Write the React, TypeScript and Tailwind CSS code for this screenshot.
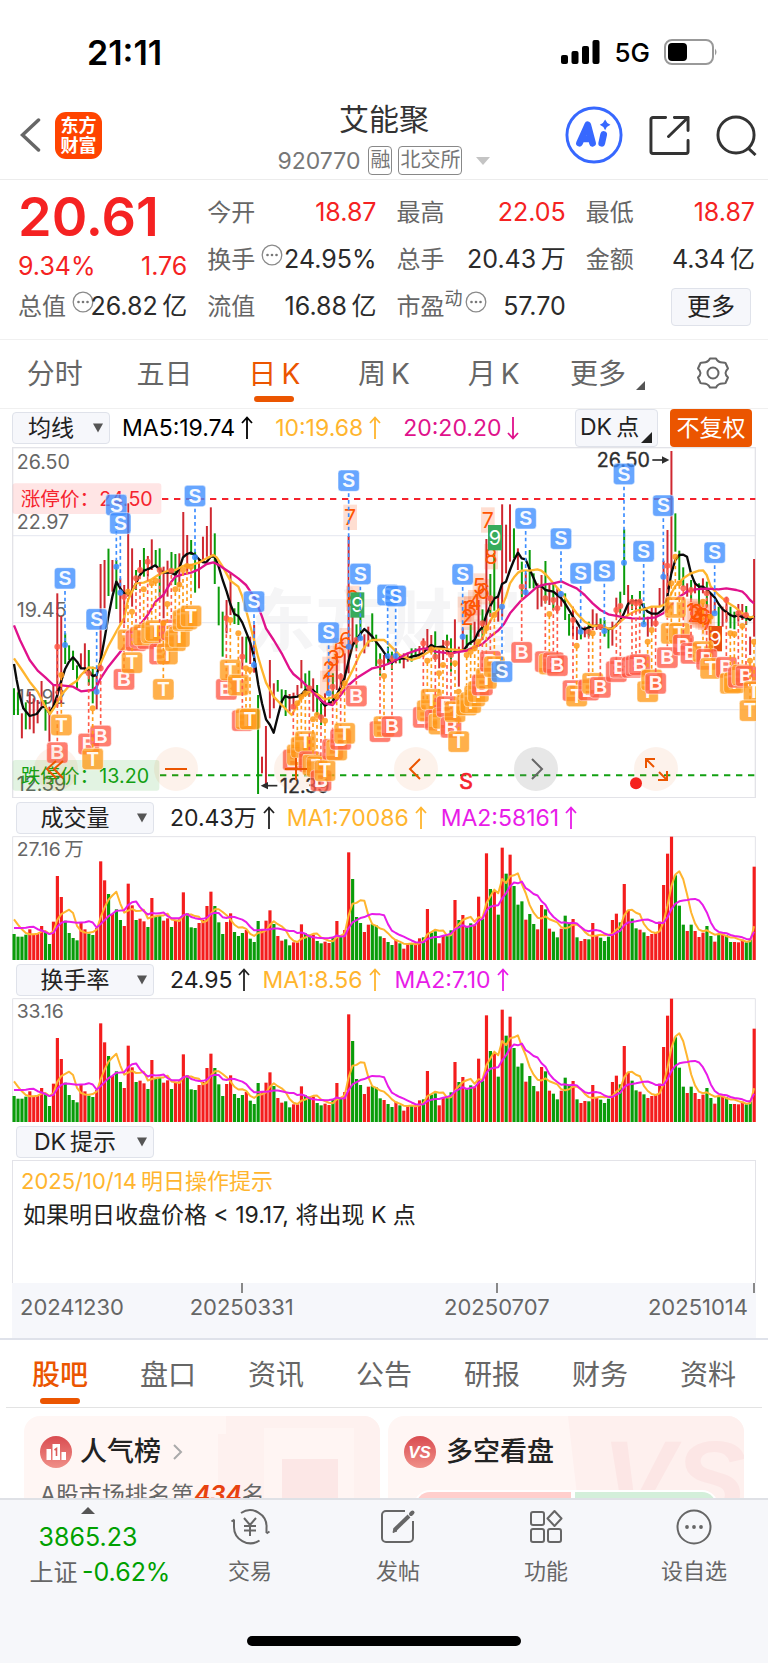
import React from 'react';

/* ---------- market data (chart units: 3 per pixel) ---------- */

const FIRST = 42;
const STEP = 11.81;
const barX = (i: number) => FIRST + i * STEP;

const VOLUME =
  'g78 g70 g70 g76 r92 r78 r78 r102 g85 g48 r115 r252 r189 g118 g81 g66 g59 r114 r92 g79 g75 r96 r296 r239 g198 r138 g152 g120 r102 r229 r164 g120 r124 r116 g99 r186 g132 g134 r118 r125 g99 r120 r122 r203 g140 g98 g96 r111 r120 r162 r205 g162 g113 g78 r114 r140 g84 g72 g81 r90 g64 g54 g117 r90 r118 r149 g108 r72 r58 g62 g44 r53 r53 r107 g80 g76 r76 g57 g50 r55 r51 g68 r117 g72 r90 r323 g243 g129 g111 r84 r106 g108 g104 g71 r66 g54 g45 r61 g50 r34 r50 g51 r51 r65 g68 r153 g82 g86 r50 r72 g76 g89 r180 g120 r135 g102 g110 r106 r190 g124 r320 g213 r208 g136 r337 g259 r316 g222 g166 g176 r121 g138 g108 r92 r165 g152 r94 g85 g68 r94 g133 g111 r123 g68 r57 r63 g62 r111 r75 g67 g57 g70 r120 r139 g113 r228 r148 g124 g95 r91 g83 r72 r78 r81 r115 r225 r319 r370 g254 g163 g106 r87 g106 r87 r69 r82 g102 g72 r55 g78 r78 g74 g54 r54 r53 r61 g53 g61 r280'
    .split(' ')
    .map((s) => ({ up: s[0] === 'r', v: Number(s.slice(1)) }));

const PRIOR = [70, 70, 70, 70, 70, 150, 140, 132, 110];

const CANDLES =
  'g745-825 g757-825 r820-895 g787-868 r755-868 r775-880 r780-850 r723-800 g780-872 r800-905 r735-800 r460-800 r528-790 g580-672 g616-660 g632-690 g676-750 r640-684 r610-700 g630-735 g680-790 r700-808 r372-685 r360-505 g326-468 r360-455 g360-507 r415-550 r435-550 r190-470 r325-500 g390-450 r360-400 g324-410 r348-410 r298-390 g330-380 g325-470 r380-535 r362-470 g336-390 g342-435 r340-440 r216-350 r285-400 g300-345 g335-458 r355-445 r290-360 r258-350 r202-345 g280-432 g440-556 g515-650 r480-580 r400-525 g505-552 g486-555 r590-688 g590-668 r590-672 r555-698 g765-1062 r950-1000 r858-1036 r660-835 r730-805 g720-755 g748-790 g750-828 r762-815 r758-800 r735-765 r660-745 g700-765 g692-770 r715-815 g735-825 g790-855 r760-830 g770-795 g700-790 r640-750 r700-750 r640-720 r288-700 r530-620 g553-625 g530-600 r583-640 r560-620 g520-605 g584-678 g640-707 r645-690 g620-670 g635-690 r625-670 g645-670 r640-685 r640-665 g625-665 g625-652 r618-655 r595-650 r567-632 r585-640 g574-660 r625-685 r600-660 g584-640 g595-695 r538-640 r620-740 r565-630 g584-625 g555-615 r545-620 r480-590 g508-600 r297-560 g402-530 g340-512 r470-545 r193-530 r254-400 r193-365 g265-355 r325-390 g365-472 r398-470 g330-445 g400-445 r430-508 r405-500 g363-490 r430-495 g430-510 r445-520 r455-500 g460-540 g522-587 r500-590 r560-600 g565-598 r560-592 g545-590 r508-570 r520-570 g535-570 g540-590 g567-625 r545-617 r473-530 g455-520 g268-465 r435-525 g465-510 r478-515 g453-520 g490-553 r530-590 r500-560 r500-560 r444-500 r362-500 r270-510 r33-400 g220-335 g332-420 g382-440 r430-470 g420-480 r425-460 g430-495 r415-460 g425-500 r460-530 r485-520 g500-570 r500-560 r470-545 g500-565 g515-568 r492-545 r492-540 g498-555 r590-645 r357-590'
    .split(' ')
    .map((s) => {
      const [hi, lo] = s.slice(1).split('-').map(Number);
      return { up: s[0] === 'r', hi, lo };
    });

const MA5 =
  '42,672 50,720 60,770 70,805 89,828 110,822 125,802 136,800 148,820 160,800 172,765 184,722 195,688 207,665 219,652 231,665 243,685 255,685 266,692 278,708 290,705 302,660 313,600 325,530 337,470 349,425 361,445 372,460 392,460 408,430 420,405 431,392 443,388 455,382 466,376 479,388 490,398 510,397 526,404 538,385 549,352 561,342 573,338 585,345 597,358 608,366 618,368 632,350 644,350 656,380 668,420 680,455 691,492 703,522 715,528 727,548 740,580 752,612 762,650 768,690 775,735 786,790 798,838 810,855 821,878 833,830 845,785 855,768 868,773 892,770 904,764 916,750 928,748 939,750 951,762 963,782 975,797 987,790 998,785 1010,765 1022,740 1034,712 1046,662 1058,615 1069,600 1081,582 1093,567 1105,578 1117,590 1128,605 1140,620 1152,637 1164,655 1176,668 1187,660 1199,656 1223,655 1235,650 1258,645 1270,638 1282,625 1294,615 1306,622 1329,620 1341,632 1353,642 1365,635 1390,632 1405,612 1424,600 1435,575 1447,562 1459,525 1471,498 1483,475 1494,470 1506,432 1518,425 1530,390 1542,360 1554,338 1565,355 1577,358 1589,388 1601,415 1612,440 1624,438 1636,450 1660,455 1672,465 1684,475 1695,490 1707,510 1719,530 1730,545 1742,565 1755,568 1766,562 1790,556 1813,562 1825,567 1837,565 1849,555 1861,540 1872,520 1884,492 1896,484 1919,484 1931,500 1943,515 1955,521 1973,521 1990,508 2002,470 2014,400 2026,360 2038,345 2050,344 2061,350 2073,400 2085,430 2097,440 2109,440 2120,448 2132,460 2144,472 2156,492 2168,508 2191,525 2203,530 2215,525 2227,532 2238,532 2250,540 2262,528';
const MA10 =
  '42,655 66,690 89,725 113,755 136,800 150,822 166,798 184,765 207,738 231,722 243,705 266,682 290,685 302,670 325,618 349,575 372,535 384,480 408,430 431,428 455,418 479,402 502,393 526,390 549,378 573,375 597,368 620,355 640,345 650,352 668,380 691,422 715,440 727,470 738,510 750,555 762,600 774,650 786,690 798,728 821,770 845,795 875,825 892,795 904,770 928,755 951,762 975,778 998,772 1022,755 1040,725 1058,690 1081,640 1105,605 1117,600 1152,600 1164,610 1176,622 1199,645 1235,660 1258,652 1282,638 1306,625 1350,628 1400,632 1424,620 1447,595 1459,565 1483,520 1506,500 1518,470 1530,430 1542,412 1554,398 1566,392 1589,392 1612,388 1624,392 1636,402 1660,430 1684,458 1707,490 1730,520 1754,545 1778,558 1801,556 1825,566 1837,566 1861,545 1884,525 1908,512 1931,508 1955,500 1979,500 2002,490 2014,460 2026,438 2050,415 2073,400 2097,392 2109,391 2120,405 2132,440 2156,465 2179,485 2203,500 2227,520 2250,532 2262,530';
const MA20 =
  '42,556 60,600 89,660 113,692 136,712 160,735 184,736 219,740 243,754 278,750 290,740 302,715 325,680 349,650 372,622 396,590 420,555 443,525 467,485 490,465 514,425 526,410 549,403 573,398 597,388 620,372 640,367 656,375 691,398 715,415 738,435 765,475 786,530 798,565 821,600 845,640 868,685 880,702 904,722 928,745 951,770 975,790 998,795 1022,765 1046,735 1069,715 1093,700 1117,685 1140,680 1164,672 1187,660 1223,640 1258,628 1282,625 1306,635 1350,640 1400,632 1424,622 1447,612 1471,590 1494,572 1512,552 1530,520 1560,485 1589,460 1612,440 1636,433 1660,430 1684,424 1707,435 1730,445 1754,465 1778,490 1801,510 1825,523 1861,530 1896,535 1931,536 1967,532 1990,520 2014,495 2038,470 2061,455 2085,448 2120,446 2156,448 2179,445 2209,450 2227,455 2238,465 2250,480 2262,490';

type Mark = [kind: 'S' | 'B' | 'T', x: number, y: number, dot: number];

const MARKS: Mark[] = [
  ['B', 172, 938, 620], ['T', 184, 855, 705], ['B', 266, 912, 700], ['B', 302, 888, 685], ['T', 278, 957, 805],
  ['B', 372, 718, 470], ['T', 384, 600, 455], ['B', 408, 602, 415], ['B', 420, 592, 390], ['T', 396, 668, 515],
  ['B', 443, 596, 365], ['T', 431, 585, 448], ['T', 455, 578, 430], ['T', 467, 572, 422], ['B', 479, 642, 390],
  ['B', 514, 570, 392], ['T', 502, 642, 492], ['T', 490, 748, 550], ['T', 526, 602, 448], ['T', 538, 590, 434],
  ['T', 549, 542, 390], ['T', 561, 537, 378], ['T', 573, 528, 380], ['B', 679, 748, 535], ['T', 691, 690, 540],
  ['T', 715, 735, 580], ['B', 727, 842, 650], ['T', 738, 837, 685], ['T', 750, 837, 690],
  ['B', 880, 960, 800], ['T', 892, 945, 790], ['T', 904, 922, 770], ['T', 916, 905, 760], ['B', 928, 965, 745],
  ['T', 939, 975, 838], ['T', 951, 980, 825], ['B', 963, 1022, 832], ['T', 975, 992, 842], ['B', 998, 928, 740],
  ['T', 1010, 930, 770], ['B', 1022, 898, 710], ['T', 1034, 880, 730], ['B', 1069, 768, 600], ['B', 1140, 875, 665],
  ['T', 1152, 860, 708], ['B', 1176, 860, 655], ['B', 1270, 832, 610], ['T', 1282, 812, 662], ['T', 1294, 778, 628],
  ['B', 1306, 840, 650], ['T', 1317, 852, 700], ['T', 1329, 835, 675], ['B', 1341, 800, 610], ['B', 1353, 862, 645],
  ['T', 1365, 815, 670], ['T', 1376, 905, 755], ['T', 1400, 795, 645], ['T', 1412, 788, 635], ['T', 1424, 768, 625],
  ['T', 1435, 755, 605], ['B', 1447, 735, 550], ['T', 1459, 715, 565], ['B', 1471, 664, 475], ['T', 1483, 680, 525],
  ['B', 1565, 637, 440], ['B', 1636, 665, 475], ['T', 1648, 672, 522], ['B', 1660, 668, 480], ['B', 1672, 677, 505],
  ['B', 1719, 752, 540], ['T', 1730, 768, 617], ['B', 1766, 750, 575], ['T', 1778, 730, 580], ['B', 1801, 742, 560],
  ['B', 1849, 695, 510], ['B', 1861, 682, 498], ['B', 1896, 682, 485], ['B', 1908, 678, 490], ['B', 1919, 674, 485],
  ['T', 1943, 755, 605], ['T', 1955, 720, 570], ['B', 1967, 730, 550], ['B', 2002, 653, 377], ['T', 2014, 580, 430],
  ['T', 2026, 502, 350], ['T', 2038, 580, 430], ['B', 2050, 615, 445], ['B', 2073, 640, 450], ['T', 2109, 635, 485],
  ['B', 2120, 658, 460], ['T', 2132, 685, 530], ['B', 2179, 682, 480], ['T', 2191, 730, 580], ['T', 2203, 728, 582],
  ['B', 2215, 712, 520], ['T', 2227, 705, 558], ['B', 2238, 708, 525], ['T', 2262, 755, 605], ['T', 2250, 812, 662],
  ['S', 195, 415, 615], ['S', 290, 538, 755], ['S', 349, 195, 380], ['S', 361, 250, 458], ['S', 585, 168, 352],
  ['S', 762, 485, 675], ['S', 1046, 122, 620], ['S', 986, 578, 760], ['S', 1081, 402, 595], ['S', 1163, 465, 648],
  ['S', 1187, 468, 648], ['S', 1388, 403, 590], ['S', 1506, 695, 500], ['S', 1577, 235, 457], ['S', 1683, 296, 462],
  ['S', 1742, 400, 575], ['S', 1813, 393, 573], ['S', 1872, 102, 368], ['S', 1931, 334, 553], ['S', 1990, 197, 410],
  ['S', 2144, 338, 520],
];

const MARK_COLOR = { S: '#3c8dff', B: '#ff5a48', T: '#ff9a18' };

const COUNTS: [string, number, number][] = [
  ['1', 980, 730], ['2', 987, 688], ['3', 1000, 655], ['5', 1018, 632], ['6', 1037, 602], ['7', 1050, 232], ['8', 1058, 475],
  ['1', 1393, 508], ['2', 1402, 532], ['3', 1412, 506], ['4', 1424, 488], ['5', 1438, 438], ['6', 1450, 455], ['7', 1463, 240], ['8', 1473, 350],
  ['1', 2072, 514], ['2', 2082, 522], ['3', 2090, 516], ['4', 2097, 526], ['5', 2106, 530], ['6', 2114, 532], ['7', 2124, 548],
];

/* ---------- charts ---------- */

function average(values: number[], span: number) {
  const all = [...PRIOR, ...values];
  return values
    .map((_, i) => {
      const end = i + PRIOR.length + 1;
      const sum = all.slice(end - span, end).reduce((a, b) => a + b, 0);
      return `${barX(i)},${480 - sum / span}`;
    })
    .join(' ');
}

const VALUES = VOLUME.map((b) => b.v);
const VOL_FAST = average(VALUES, 5);
const VOL_SLOW = average(VALUES, 10);

function VolumeChart({ label, name }: { label: string; name: string }) {
  return (
    <svg viewBox="36 108 2232 372" className="block w-full" role="img" aria-label={name}>
      <path d="M38 480V110H2266V480" fill="none" stroke="#e3e3e8" strokeWidth="3" />
      {VOLUME.map((b, i) => (
        <rect key={i} x={barX(i) - 4.5} y={480 - b.v} width="9.5" height={b.v} fill={b.up ? '#f41d1d' : '#0a9c0a'} />
      ))}
      <polyline points={VOL_FAST} fill="none" stroke="#ffb52e" strokeWidth="6" strokeLinejoin="round" />
      <polyline points={VOL_SLOW} fill="none" stroke="#e81ce8" strokeWidth="6" strokeLinejoin="round" />
      <text x="50" y="168" fontSize="58" fill="#666">{label}</text>
    </svg>
  );
}

function Marker({ mark: [kind, x, y, dot] }: { mark: Mark }) {
  const color = MARK_COLOR[kind];
  const edge = dot > y ? y + 38 : y - 34;
  return (
    <g>
      <line x1={x} x2={x} y1={edge} y2={dot} stroke={color} strokeWidth="5" strokeDasharray="11 9" />
      <circle cx={x} cy={dot} r="9" fill={color} opacity="0.85" />
      <rect x={x - 32} y={y - 32} width="64" height="64" rx="10" fill={color} fillOpacity="0.78" stroke="#fff" strokeOpacity="0.5" strokeWidth="3" />
      <text x={x} y={y + 20} fontSize="58" fontWeight="700" textAnchor="middle" fill="#fff" fillOpacity="0.95" fontFamily="Liberation Sans, sans-serif">
        {kind}
      </text>
    </g>
  );
}

function PriceChart() {
  return (
    <svg viewBox="36 21 2232 1053" className="block w-full" role="img" aria-label="日K线图">
      <text x="1152" y="617" fontSize="206" fontWeight="700" textAnchor="middle" fill="#f5f5f6">东方财富</text>
      <path d="M38 287H2266M38 548H2266M38 809H2266" stroke="#e9ebf2" strokeWidth="4" />
      <rect x="38" y="23" width="2228" height="1050" fill="none" stroke="#e3e3e8" strokeWidth="4" />
      <g fill="#666" fontSize="59">
        <text x="50" y="88">26.50</text>
        <text x="50" y="266">22.97</text>
        <text x="50" y="530">19.45</text>
        <text x="50" y="792">15.92</text>
        <text x="50" y="1052">12.39</text>
      </g>
      <rect x="38" y="130" width="446" height="92" rx="8" fill="#ff2a2a" fillOpacity="0.12" />
      <rect x="38" y="960" width="440" height="92" rx="8" fill="#12a012" fillOpacity="0.12" />
      <path d="M486 177H2266" stroke="#f5232d" strokeWidth="6" strokeDasharray="19 17" />
      <path d="M480 1006H2266" stroke="#12a012" strokeWidth="6" strokeDasharray="19 17" />
      <text x="62" y="199" fontSize="59" fill="#f5232d">涨停价：24.50</text>
      <text x="62" y="1029" fontSize="59" fill="#12a012">跌停价：13.20</text>

      {CANDLES.map((c, i) => (
        <line key={i} x1={barX(i)} x2={barX(i)} y1={c.hi} y2={c.lo} stroke={c.up ? '#cf2830' : '#0a9c0a'} strokeWidth="6" />
      ))}
      <g fill="none" strokeWidth="7" strokeLinejoin="round">
        <polyline points={MA5} stroke="#0a0a0a" />
        <polyline points={MA10} stroke="#ffb52e" />
        <polyline points={MA20} stroke="#e0128c" />
      </g>

      <g fontSize="64" textAnchor="middle" fill="#ff5500">
        {COUNTS.map(([n, x, y], i) => (
          <g key={i}>
            <rect x={x - 20} y={y - 38} width="41" height="76" fill="#ff5a1a" fillOpacity="0.2" />
            <text x={x} y={y + 23}>{n}</text>
          </g>
        ))}
      </g>
      <g fontSize="60" textAnchor="middle" fill="#fff">
        <rect x="1051" y="457" width="42" height="76" fill="#37ab5b" />
        <text x="1072" y="517">9</text>
        <rect x="1464" y="255" width="42" height="76" fill="#37ab5b" />
        <text x="1485" y="316">9</text>
        <rect x="2126" y="558" width="40" height="76" fill="#e84e10" />
        <text x="2146" y="618">9</text>
      </g>

      <text x="1790" y="80" fontSize="59" fill="#2d2d2d" stroke="#2d2d2d" strokeWidth="1">26.50</text>
      <path d="M1957 60H2000" stroke="#2d2d2d" strokeWidth="5" />
      <path d="M2008 60L1986 49V71Z" fill="#2d2d2d" />
      <text x="840" y="1058" fontSize="59" fill="#2d2d2d" stroke="#2d2d2d" strokeWidth="1">12.39</text>
      <path d="M790 1037H832" stroke="#2d2d2d" strokeWidth="5" />
      <path d="M782 1037L804 1026V1048Z" fill="#2d2d2d" />

      {MARKS.map((m, i) => (
        <Marker key={i} mark={m} />
      ))}
      <text x="1398" y="1046" fontSize="64" textAnchor="middle" fill="#f5232d" stroke="#f5232d" strokeWidth="2">S</text>
      <circle cx="1908" cy="1030" r="18" fill="#f5201d" />
    </svg>
  );
}

const TOOLS: { name: string; d: string; muted?: boolean }[] = [
  { name: '快退', d: 'M22 14L13 22L22 31M29 14L20 22L29 31' },
  { name: '缩小', d: 'M11 22H33' },
  { name: '放大', d: 'M11 22H33M22 11V33' },
  { name: '左移', d: 'M26 12L16 22L26 32' },
  { name: '右移', d: 'M18 12L28 22L18 32', muted: true },
  { name: '全屏', d: 'M12 21V12H21M12 12L20 20M24 33H33V24M33 33L25 25' },
];

/* ---------- small pieces ---------- */

function Arrow({ down }: { down?: boolean }) {
  return (
    <svg viewBox="0 0 12 24" className="ml-1.5 h-6 w-3 shrink-0" fill="none" stroke="currentColor" strokeWidth="1.800" aria-hidden="true">
      <path d={down ? 'M6 1V22.5M1 17L6 22.5L11 17' : 'M6 23V1.5M1 7L6 1.5L11 7'} />
    </svg>
  );
}

function Info() {
  return (
    <svg viewBox="0 0 22 22" className="mb-2.5 size-[22px] shrink-0" aria-hidden="true">
      <circle cx="11" cy="11" r="9.8" fill="none" stroke="#8a8a8a" strokeWidth="1.3" />
      <g fill="#777">
        <circle cx="6.5" cy="11" r="1.3" />
        <circle cx="11" cy="11" r="1.3" />
        <circle cx="15.5" cy="11" r="1.3" />
      </g>
    </svg>
  );
}

function Stat({ label, value, red, info, sup }: { label: string; value: string; red?: boolean; info?: boolean; sup?: string }) {
  return (
    <div className="flex h-[47px] items-center justify-between whitespace-nowrap">
      <dt className="flex items-center text-2xl text-[#666]">
        {label}
        {sup && <span className="mb-4 text-lg leading-none">{sup}</span>}
        {info && <span className={sup ? 'w-6 pl-0.5' : 'w-6 pl-1.5'}><Info /></span>}
      </dt>
      <dd className={`flex w-0 grow justify-end text-[25px] ${red ? 'text-[#f52222]' : 'text-[#2b2b2b]'}`}>{value}</dd>
    </div>
  );
}

function Select({ children, wide }: { children: React.ReactNode; wide?: boolean }) {
  return (
    <button
      className={`flex h-8 shrink-0 items-center rounded border border-[#dfe2ea] bg-[#f6f7fb] pr-1.5 text-[23px] leading-none text-[#222] ${wide ? 'ml-1 w-[138px]' : 'w-[98px]'}`}
    >
      <span className="grow pr-1 text-center">{children}</span>
      <svg viewBox="0 0 10 10" className="size-2.5" aria-hidden="true"><path d="M0 0.5H10L5 9.5Z" fill="#555" /></svg>
    </button>
  );
}

function Indicator({ title, value, fast, slow }: { title: string; value: string; fast: string; slow: string }) {
  return (
    <div className="flex h-[38px] items-center pt-0.5 text-[23px] whitespace-nowrap">
      <Select wide>{title}</Select>
      <span className="ml-4 flex items-center text-[#222]">{value}<Arrow /></span>
      <span className="ml-3 flex items-center text-[#ffb52e]">{fast}<Arrow /></span>
      <span className="ml-3.5 flex items-center text-[#e81ce8]">{slow}<Arrow /></span>
    </div>
  );
}

const PERIODS = ['分时', '五日', '日\u2009K', '周\u2009K', '月\u2009K', '更多'];
const SECTIONS = ['股吧', '盘口', '资讯', '公告', '研报', '财务', '资料'];

const TABS: { name: string; icon: React.ReactNode }[] = [
  {
    name: '交易',
    icon: (
      <>
        <path d="M11 5A16.5 16.5 0 0 1 36.500 20V25M29.500 32.500A16.5 16.5 0 0 1 4 18V12" />
        <path d="M1.500 13.500L4.500 11.500M36.500 25.500L39.500 23.500" />
        <path d="M14 10L20 17L26 10M20 17V28M14 18H26M14 22.500H26" />
      </>
    ),
  },
  {
    name: '发帖',
    icon: (
      <>
        <path d="M27 3H8A4 4 0 0 0 4 7V30A4 4 0 0 0 8 34H31A4 4 0 0 0 35 30V13" />
        <path d="M17 21.500L31 8" strokeWidth="4" />
        <path d="M15 24.500L16 20L19 23Z" fill="currentColor" strokeWidth="1" />
        <path d="M33 6L34.500 4.500" strokeWidth="4" strokeLinecap="round" />
      </>
    ),
  },
  {
    name: '功能',
    icon: (
      <>
        <rect x="5" y="4" width="13" height="13" rx="2" />
        <rect x="5" y="21" width="13" height="13" rx="2" />
        <rect x="22" y="21" width="13" height="13" rx="2" />
        <path d="M28.500 3L35.500 10.500L28.500 18L21.500 10.500Z" strokeLinejoin="round" />
      </>
    ),
  },
  {
    name: '设自选',
    icon: (
      <>
        <circle cx="20" cy="19" r="16.500" />
        <g fill="currentColor" stroke="none">
          <circle cx="13" cy="19" r="1.900" />
          <circle cx="20" cy="19" r="1.900" />
          <circle cx="27" cy="19" r="1.900" />
        </g>
      </>
    ),
  },
];

/* ---------- page ---------- */

export default function App() {
  return (
    <div className="flex h-screen flex-col overflow-hidden bg-white font-[Inter,'Noto_Sans_CJK_SC',sans-serif] text-[#333]">
      <main className="min-h-0 grow overflow-hidden">
        <div className="flex h-[100px] items-center justify-between pt-1 pr-[50px] pl-[87px] text-black">
          <span className="text-[34px] font-semibold">21:11</span>
          <span className="flex items-center">
            <svg viewBox="0 0 39 25" className="h-[25px] w-[39px]" aria-label="信号">
              <rect x="0" y="15" width="7" height="9" rx="2" />
              <rect x="10.500" y="11" width="7" height="13" rx="2" />
              <rect x="21" y="6" width="7" height="18" rx="2" />
              <rect x="31.500" y="0" width="7" height="24" rx="2" />
            </svg>
            <span className="ml-3.5 text-[26px] font-medium">5G</span>
            <svg viewBox="0 0 54 26" className="ml-3.5 h-[26px] w-[54px]" aria-label="电量">
              <rect x="1" y="1" width="48" height="24" rx="7" fill="none" stroke="#999" strokeWidth="2" />
              <rect x="4" y="4" width="19" height="18" rx="4" />
              <path d="M51 9.500Q54 13 51 16.500Z" fill="#999" />
            </svg>
          </span>
        </div>

        <header className="grid h-20 grid-cols-[1fr_auto_1fr] border-b border-[#ececec]">
          <div className="flex items-start gap-3.5 pt-3 pl-5">
            <button aria-label="返回" className="pt-1.5">
              <svg viewBox="0 0 21 34" className="h-[34px] w-[21px]" fill="none" stroke="#666" strokeWidth="3.500" strokeLinecap="round">
                <path d="M18.500 2L2.500 17L18.500 32" />
              </svg>
            </button>
            <a href="#home" className="grid size-[47px] place-content-center rounded-[11px] bg-[#ff4400] text-center text-lg leading-5 font-bold text-white">
              东方<br />财富
            </a>
          </div>
          <div className="flex flex-col items-center">
            <h1 className="text-[30px] leading-[38px] font-normal text-[#333]">艾能聚</h1>
            <button className="mt-2 flex items-center gap-1.5 text-[#777]">
              <span className="text-[23px] leading-7">920770</span>
              <span className="ml-0.5 rounded border border-[#888] px-px text-[20px] leading-[27px]">融</span>
              <span className="rounded border border-[#888] px-px text-[20px] leading-[27px]">北交所</span>
              <svg viewBox="0 0 14 8" className="ml-2 h-2 w-3.5" aria-hidden="true"><path d="M0 0H14L7 8Z" fill="#c4c4c4" /></svg>
            </button>
          </div>
          <div className="flex items-start justify-end gap-[26px] pt-1.5 pr-[11px]">
            <button aria-label="AI">
              <svg viewBox="0 0 60 60" className="size-[58px]">
                <circle cx="30" cy="30" r="28" fill="none" stroke="#3768ff" strokeWidth="3" />
                <g fill="none" stroke="#3768ff" strokeWidth="7" strokeLinejoin="round" strokeLinecap="round">
                  <path d="M15 38.500L23.500 19.500L28.500 38.500M19 34H27" />
                  <path d="M40 29.500L38 38.500" />
                </g>
                <path d="M41.500 14Q43 18 47 19.500Q43 21 41.500 25Q40 21 36 19.500Q40 18 41.500 14Z" fill="#3768ff" />
              </svg>
            </button>
            <button aria-label="分享" className="pt-[9px]">
              <svg viewBox="0 0 42 42" className="size-[41px]" fill="none" stroke="#333" strokeWidth="3" strokeLinejoin="round" strokeLinecap="round">
                <path d="M17 2.500H4A2 2 0 0 0 2 4.500V37.500A2 2 0 0 0 4 39.500H38A2 2 0 0 0 40 37.500V26M26 2.500H40V16M40 2.500L20 22" />
              </svg>
            </button>
            <button aria-label="搜索" className="pt-[9px]">
              <svg viewBox="0 0 42 42" className="size-[41px]" fill="none" stroke="#333" strokeWidth="3">
                <circle cx="20.500" cy="20.500" r="18.500" />
                <path d="M33 34L40.500 41" />
              </svg>
            </button>
          </div>
        </header>

        <dl className="grid h-40 grid-cols-4 gap-5 border-b border-[#f0f0f0] pt-[9px] pr-[13px] pl-[18px]">
          <div>
            <div className="text-[54px] leading-[56px] font-semibold text-[#f52222]">20.61</div>
            <div className="flex h-[38px] items-end justify-between text-[25px] leading-[34px] text-[#f52222]">
              <span>9.34%</span>
              <span>1.76</span>
            </div>
            <Stat label="总值" value={'26.82\u2009亿'} info />
          </div>
          <div>
            <Stat label="今开" value="18.87" red />
            <Stat label="换手" value="24.95%" info />
            <Stat label="流值" value={'16.88\u2009亿'} />
          </div>
          <div>
            <Stat label="最高" value="22.05" red />
            <Stat label="总手" value={'20.43\u2009万'} />
            <Stat label="市盈" value="57.70" info sup="动" />
          </div>
          <div>
            <Stat label="最低" value="18.87" red />
            <Stat label="金额" value={'4.34\u2009亿'} />
            <div className="flex h-[47px] items-center justify-end pr-1">
              <button className="h-[38px] w-20 rounded border border-[#dfe2ea] bg-[#f6f7fb] text-2xl leading-none text-[#222]">更多</button>
            </div>
          </div>
        </dl>

        <nav className="grid h-[69px] grid-cols-7 border-b border-[#f0f0f0] text-[28px] text-[#666]" aria-label="周期">
          {PERIODS.map((p, i) => (
            <button key={p} className={`flex flex-col items-center pt-3 leading-[44px] ${i === 2 ? 'text-[#eb5500]' : ''}`}>
              <span className={`flex items-end ${i === 5 ? 'pl-2' : ''}`}>
                {p}
                {i === 5 && (
                  <svg viewBox="0 0 9 9" className="mb-1.5 ml-2.5 size-[9px]" aria-hidden="true"><path d="M9 0V9H0Z" fill="#555" /></svg>
                )}
              </span>
              {i === 2 && <span className="h-1.5 w-10 rounded-full bg-[#eb5500]" />}
            </button>
          ))}
          <button aria-label="设置" className="flex justify-center pt-4">
            <svg viewBox="0 0 34 34" className="size-[34px]" fill="none" stroke="#666" strokeWidth="2" strokeLinejoin="round">
              <path d="M14 2.500H20Q22 6.500 26.500 6.500Q29 6.500 29.500 7L32 12.500Q29.500 15 29.500 17Q29.500 19 32 21.500L29.500 27Q29 27.500 26.500 27.500Q22 27.500 20 31.500H14Q12 27.500 7.500 27.500Q5 27.500 4.500 27L2 21.500Q4.500 19 4.500 17Q4.500 15 2 12.500L4.500 7Q5 6.500 7.500 6.500Q12 6.500 14 2.500Z" />
              <circle cx="17" cy="17" r="5.500" />
            </svg>
          </button>
        </nav>

        <section className="px-3">
          <div className="flex h-[38px] items-center text-[23px] whitespace-nowrap">
            <Select>均线</Select>
            <span className="ml-3 flex items-center text-black">MA5:19.74<Arrow /></span>
            <span className="ml-[22px] flex items-center text-[#ffb52e]">10:19.68<Arrow /></span>
            <span className="ml-[22px] flex items-center text-[#e0128c]">20:20.20<Arrow down /></span>
            <button className="ml-auto flex h-[38px] w-[83px] items-end rounded border border-[#dfe2ea] bg-[#f6f7fb] pb-[3px] pl-1 leading-8 text-[#222]">
              {'DK\u2009点'}
              <svg viewBox="0 0 11 11" className="ml-0.5 size-[11px]" aria-hidden="true"><path d="M11 0V11H0Z" fill="#222" /></svg>
            </button>
            <button className="mr-1 ml-3 h-[38px] w-[82px] rounded bg-[#eb5500] text-white">不复权</button>
          </div>

          <div className="relative">
            <PriceChart />
            <div className="absolute inset-x-0 bottom-[7px] flex justify-between pr-[78px] pl-[22px]">
              {TOOLS.map((t) => (
                <button
                  key={t.name}
                  aria-label={t.name}
                  className={`size-11 rounded-full ${t.muted ? 'bg-[#888]/20 text-[#666]' : 'bg-[#eb5500]/8 text-[#eb5500]'}`}
                >
                  <svg viewBox="0 0 44 44" className="size-11" fill="none" stroke="currentColor" strokeWidth="2"><path d={t.d} /></svg>
                </button>
              ))}
            </div>
          </div>

          <Indicator title="成交量" value="20.43万" fast="MA1:70086" slow="MA2:58161" />
          <VolumeChart label={'27.16\u2009万'} name="成交量图" />
          <Indicator title="换手率" value="24.95" fast="MA1:8.56" slow="MA2:7.10" />
          <VolumeChart label="33.16" name="换手率图" />

          <div className="flex h-[38px] items-center pt-0.5"><Select wide>{'DK\u2009提示'}</Select></div>
          <div className="h-[123px] border border-b-0 border-[#e3e3e8] pt-1 pl-2">
            <p className="text-[22px] leading-8 text-[#ffb52e]">{'2025/10/14\u2009明日操作提示'}</p>
            <p className="pl-0.5 text-[23px] leading-9 text-[#222]">如果明日收盘价格 &lt; 19.17, 将出现 K 点</p>
          </div>
          <div className="grid h-[55px] grid-cols-[31%_1fr] bg-[#f6f7fb] text-[22px] leading-[28px] text-[#666]">
            <div className="pt-2.5 pl-2">20241230</div>
            <div className="-ml-[53px] flex justify-between">
              <div className="flex flex-col items-center"><i className="h-2.5 w-0.5 bg-[#888]" />20250331</div>
              <div className="flex flex-col items-center pl-[52px]"><i className="h-2.5 w-0.5 bg-[#888]" />20250707</div>
              <div className="flex flex-col items-end"><i className="mr-px h-2.5 w-0.5 bg-[#888]" /><span className="pr-2">20251014</span></div>
            </div>
          </div>
        </section>

        <nav className="border-t-2 border-[#dfe2ea] px-1.5" aria-label="栏目">
          <div className="grid h-[68px] grid-cols-7 border-b border-[#e3e3e3] text-[28px] text-[#666]">
            {SECTIONS.map((s, i) => (
              <a key={s} href={`#${s}`} className={`flex flex-col items-center pt-3 leading-[46px] ${i === 0 ? 'font-medium text-[#eb5500]' : ''}`}>
                {s}
                {i === 0 && <span className="h-1.5 w-10 rounded-full bg-[#eb5500]" />}
              </a>
            ))}
          </div>
        </nav>

        <div className="grid grid-cols-2 gap-2 px-6 pt-2">
          <article className="relative h-[140px] overflow-hidden rounded-2xl bg-[#fff6f4]">
            <svg viewBox="0 0 356 140" className="absolute inset-0 size-full" aria-hidden="true">
              <path d="M202 0H356V140H170V76H194V18H202Z" fill="#fef1ef" />
              <path d="M240 12H330V140H240Z" fill="#fff5f3" />
              <path d="M258 43H314V140H258Z" fill="#fce7e6" />
              <path d="M215 95H245V140H215Z" fill="#fce7e6" />
              <path d="M274 104L289 92H299V140H286V108L274 114Z" fill="#fff6f4" />
            </svg>
            <div className="relative px-4 pt-[17px]">
              <h2 className="flex items-center gap-2 text-[27px] leading-[38px] font-medium text-[#222]">
                <svg viewBox="0 0 32 32" className="size-8" aria-hidden="true">
                  <defs><linearGradient id="badge" x2="0" y2="1"><stop stopColor="#d94c50" /><stop offset="1" stopColor="#f08f88" /></linearGradient></defs>
                  <circle cx="16" cy="16" r="16" fill="url(#badge)" />
                  <path d="M6.500 13H11V24H6.500ZM12.500 8H20V24H12.500ZM21.500 16H26V24H21.500Z" fill="#fff" />
                  <path d="M14.500 14L16.500 12.500V20" fill="none" stroke="#d95a58" strokeWidth="1.600" />
                </svg>
                人气榜
                <svg viewBox="0 0 10 16" className="ml-1 h-4 w-2.5" fill="none" stroke="#aaa" strokeWidth="2" aria-hidden="true"><path d="M1 1L8 8L1 15" /></svg>
              </h2>
              <p className="mt-1.5 text-[23px] leading-9 text-[#666]">
                A股市场排名第<b className="text-2xl text-[#e8420f] italic">434</b>名
              </p>
            </div>
          </article>
          <article className="relative h-[140px] overflow-hidden rounded-2xl bg-[#fff6f4]">
            <svg viewBox="0 0 356 140" className="absolute inset-0 size-full" aria-hidden="true">
              <path d="M180 0H356V140H196Z" fill="#fef0ee" />
              <text x="214" y="100" fontSize="108" fontWeight="800" fontStyle="italic" fill="#fce6e5" fontFamily="Liberation Sans, sans-serif">VS</text>
            </svg>
            <div className="relative px-4 pt-[17px]">
              <h2 className="flex items-center gap-2.5 text-[27px] leading-[38px] font-medium text-[#222]">
                <svg viewBox="0 0 32 32" className="size-8" aria-hidden="true">
                  <circle cx="16" cy="16" r="16" fill="url(#badge)" />
                  <text x="15.500" y="22" fontSize="17" fontWeight="800" fontStyle="italic" textAnchor="middle" fill="#fff" fontFamily="Liberation Sans, sans-serif">VS</text>
                </svg>
                多空看盘
              </h2>
              <div className="mx-2.5 mt-[19px] flex h-10 gap-1 overflow-hidden rounded-2xl border-2 border-white bg-white">
                <span className="grow bg-[#ffcfcd]" />
                <span className="w-[47%] bg-[#d3efda]" />
              </div>
            </div>
          </article>
        </div>
      </main>

      <footer className="h-[165px] shrink-0 border-t-2 border-[#dfe1e6] bg-[#f6f7fa]">
        <nav className="grid h-[136px] grid-cols-[176fr_148fr_148fr_148fr_148fr] text-[22px] text-[#666]" aria-label="操作">
          <a href="#index" className="flex flex-col items-center pt-[7px] text-2xl whitespace-nowrap">
            <svg viewBox="0 0 14 7" className="h-[7px] w-3.5" aria-hidden="true"><path d="M7 0L14 7H0Z" fill="#555" /></svg>
            <span className="mt-1.5 text-[25px] leading-[34px] text-[#00a000]">3865.23</span>
            <span className="pl-6 leading-9">{'上证\u2009'}<span className="text-[25px] text-[#00a000]">-0.62%</span></span>
          </a>
          {TABS.map((t) => (
            <button key={t.name} className="flex flex-col items-center pt-2">
              <svg viewBox="0 0 40 38" className="h-[38px] w-10" fill="none" stroke="currentColor" strokeWidth="2">{t.icon}</svg>
              <span className="mt-2 leading-[34px]">{t.name}</span>
            </button>
          ))}
        </nav>
        <div className="mx-auto h-2.5 w-[274px] rounded-full bg-black" />
      </footer>
    </div>
  );
}
